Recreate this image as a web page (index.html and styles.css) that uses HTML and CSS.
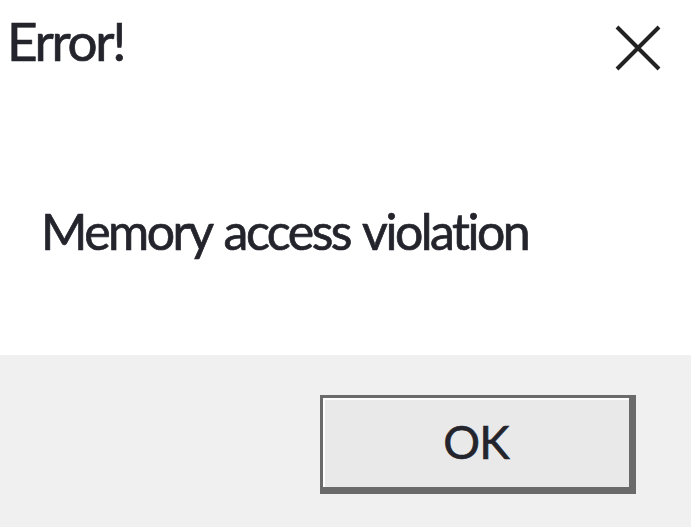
FILE: index.html
```html
<!DOCTYPE html>
<html>
<head>
<meta http-equiv="Content-Type" content="text/html; charset=utf-8">
<title>Error!</title>
<link rel="stylesheet" href="styles.css">
</head>
<body>

<div class="dialog">
  <div class="dialog__top">
    <div class="dialog__titlebar">
      <p class="dialog__title">Error!</p>
      <a class="dialog__close" href="#close">
        <svg viewBox="0 0 46 46" width="46" height="46">
          <path d="M2 2L44 44M44 2L2 44" stroke="#222" stroke-width="4" fill="none"/>
        </svg>
      </a>
    </div>
    <p class="dialog__msg">Memory access violation</p>
  </div>
  <div class="dialog__footer">
    <button class="dialog__btn" type="button">OK</button>
  </div>
</div>

</body>
</html>
```

FILE: styles.css
```css
/* reset */
html,body,div,p{margin:0;padding:0}
html,body{font-family:Lato,"Noto Sans",sans-serif;font-size:16px;color:#222;font-variant-ligatures:none;}
body{inline-size:691px;block-size:527px;overflow:hidden;background:#fff;}

/* dialog */
.dialog{display:flex;flex-direction:column;block-size:527px;}
.dialog__top{background:#fff;block-size:355px;box-sizing:border-box;}
.dialog__titlebar{display:flex;align-items:flex-start;justify-content:space-between;padding:5px 30px 0 7px;}
.dialog__title{font-size:53px;line-height:72px;letter-spacing:-2.3px;color:#24242c;-webkit-text-stroke:.7px #24242c;}
.dialog__close{display:block;margin-top:20px;line-height:0;}
.dialog__msg{font-size:50px;line-height:64px;letter-spacing:-2.5px;word-spacing:3px;color:#24242c;-webkit-text-stroke:.7px #24242c;padding:122px 0 0 41px;}

.dialog__footer{flex:1;background:#f0f0f0;padding:40px 0 0 320px;}
.dialog__btn{display:block;inline-size:316px;block-size:99px;box-sizing:border-box;font-family:Lato,"Noto Sans",sans-serif;font-size:46px;letter-spacing:-1px;color:#24242c;-webkit-text-stroke:.6px #24242c;background:#e9e9e9;border:3px solid #6a6a6a;border-right-width:7px;border-bottom-width:7px;box-shadow:inset 2px 2px 0 #fdfdfd;padding:0 0 2px;cursor:pointer;}
```
